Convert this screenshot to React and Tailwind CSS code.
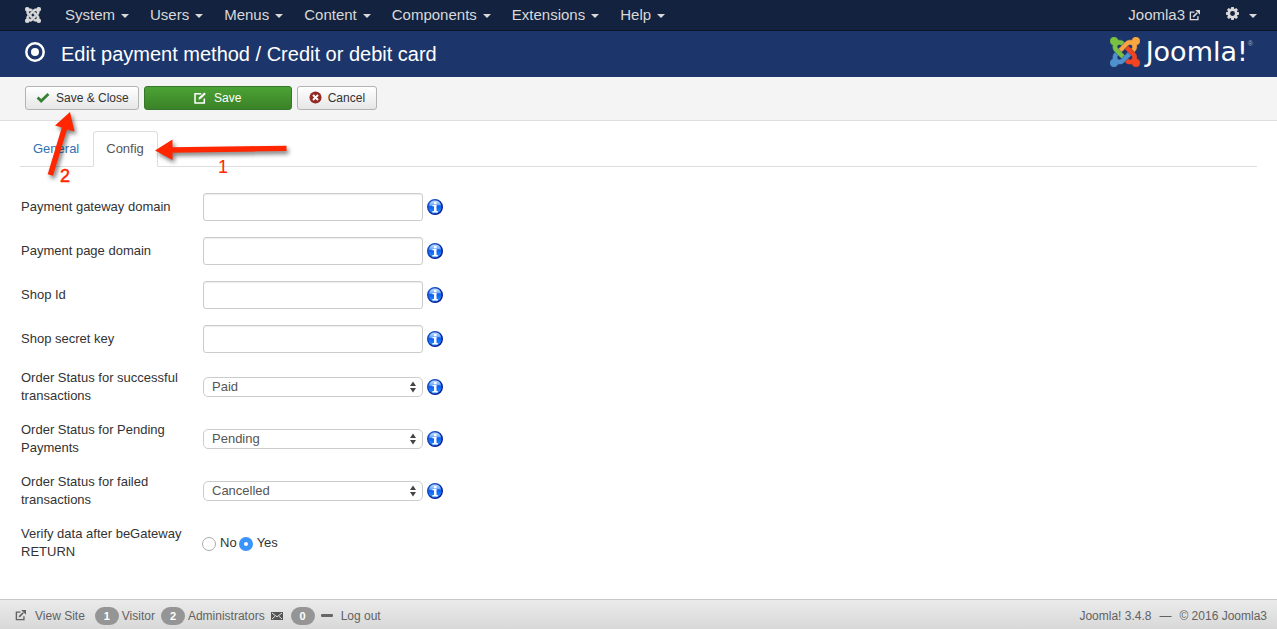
import { useState } from "react";

const JOOMLA_PIECES = [
  {
    color: "#7ac143",
    d: "M.6 92.1C.6 58.8 27.4 32 60.4 32c30 0 54.5 21.9 59.2 50.2 32.6-7.6 67.1.6 96.5 30l-44.3 44.3c-20.5-20.5-42.6-16.3-55.4-3.5-14.3 14.3-14.3 37.9 0 52.2l99.5 99.5-44 44.3c-87.7-87.2-49.7-49.7-99.8-99.7-26.8-26.5-35-64.8-24.8-98.9C20.4 144.6.6 120.7.6 92.1z",
  },
  {
    color: "#f9a541",
    d: "M130.1 208.5l44.3 44.3c10-10 89.7-89.7 99.7-99.8 14.3-14.3 37.6-14.3 51.9 0 12.8 12.8 17 35-3.5 55.4l44 44.3c31.2-31.2 38.5-67.6 28.9-101.2 29.2-4.1 51.9-29.2 51.9-59.5 0-33.2-26.8-60.1-59.8-60.1-30.3 0-55.4 22.5-59.5 51.6-33.8-9.9-71.7-1.5-98.3 25.1-18.3 19.1-71.1 71.5-99.6 99.9z",
  },
  {
    color: "#f44321",
    d: "M396.4 360.7c8.2-32.7-.9-68.5-26.3-93.9-11.8-12.2 5 4.7-99.5-99.7l-44.3 44.3 99.7 99.7c14.3 14.3 14.3 37.6 0 51.9-12.8 12.8-35 17-55.4-3.5l-44 44.3c27.6 30.2 68 38.8 102.7 28 5.5 27.4 29.7 48.1 58.9 48.1 33 0 59.8-26.8 59.8-60.1 0-30.2-22.5-55-51.6-59.1z",
  },
  {
    color: "#5091cd",
    d: "M312.1 307.6l-44-44.3c-87 86.4-50.4 50.4-99.7 99.8-14.3 14.3-37.6 14.3-51.9 0-13.1-13.4-16.9-35.3 3.2-55.4l-44-44.3c-30.2 30.2-38 65.2-29.5 98.3-26.7 6-46.2 29.9-46.2 58.2C0 453.2 26.8 480 59.8 480c28.6 0 52.5-19.8 58.6-46.7 32.7 8.2 68.5-.6 94.2-26 32.1-32 12.2-12.4 99.5-99.7z",
  },
];

function JoomlaMark({ className, mono }) {
  return (
    <svg viewBox="0 32 448 448" className={className} aria-hidden="true">
      {JOOMLA_PIECES.map((p) => (
        <path
          key={p.color}
          d={p.d}
          fill={mono ? "currentColor" : p.color}
          stroke={mono ? "currentColor" : p.color}
          strokeWidth={mono ? 14 : 8}
        />
      ))}
    </svg>
  );
}

function Caret() {
  return (
    <svg viewBox="0 0 8 4" className="mt-0.5 h-1 w-2" aria-hidden="true">
      <path d="M0 0h8L4 4z" fill="currentColor" />
    </svg>
  );
}

function ExternalIcon({ className }) {
  return (
    <svg viewBox="0 0 16 16" className={className} fill="none" stroke="currentColor" strokeWidth="2" aria-hidden="true">
      <path d="M8 3H2v11h11V9" />
      <path d="M6 10l6-6" strokeWidth="2.4" />
      <path d="M9 0h7v7z" fill="currentColor" stroke="none" />
    </svg>
  );
}

function GearIcon() {
  const teeth = [0, 45, 90, 135, 180, 225, 270, 315];
  return (
    <svg viewBox="0 0 16 16" className="mb-1 size-[13px]" aria-hidden="true">
      <circle cx="8" cy="8" r="4.6" fill="none" stroke="currentColor" strokeWidth="3.2" />
      {teeth.map((a) => (
        <path key={a} d="M6.5 0h3l.7 3.2H5.8z" fill="currentColor" transform={`rotate(${a} 8 8)`} />
      ))}
    </svg>
  );
}

function InfoIcon() {
  return (
    <svg viewBox="0 0 16 16" className="size-4 shrink-0" role="img" aria-label="Info">
      <defs>
        <linearGradient id="info-fill" x1="0" y1="0" x2="0" y2="1">
          <stop offset="0" stopColor="#1b63dd" />
          <stop offset=".5" stopColor="#0d62f2" />
          <stop offset="1" stopColor="#2f9bff" />
        </linearGradient>
        <linearGradient id="info-shine" x1="0" y1="0" x2="0" y2="1">
          <stop offset="0" stopColor="#c4dcff" />
          <stop offset="1" stopColor="#5b9df8" />
        </linearGradient>
        <linearGradient id="info-rim" x1="0" y1="0" x2="1" y2="1">
          <stop offset="0" stopColor="#1f5fd2" />
          <stop offset="1" stopColor="#00067c" />
        </linearGradient>
      </defs>
      <circle cx="8" cy="8" r="7.3" fill="url(#info-fill)" stroke="url(#info-rim)" strokeWidth="1.4" />
      <path d="M2 6.6a6.1 6.1 0 0 1 12 0C11 5.6 7 8.2 2 6.6z" fill="url(#info-shine)" />
      <path d="M7 3h2.5v2.2H7zM5.5 6h4v6h1.3v1.4H5.4V12H7V7.3H5.5z" fill="#fff" />
    </svg>
  );
}

const MENUS = ["System", "Users", "Menus", "Content", "Components", "Extensions", "Help"];

function NavBar() {
  return (
    <nav className="flex h-[31px] items-center border-b border-[#0d1526] bg-[#13223f] pr-5 pl-[25px] text-[15px] leading-5 text-[#d9d9d9]">
      <a href="#home" aria-label="Joomla" className="mr-6">
        <JoomlaMark mono className="size-4" />
      </a>
      <ul className="flex gap-[21px]">
        {MENUS.map((m) => (
          <li key={m}>
            <a href="#menu" className="flex items-center gap-1.5">
              {m}
              <Caret />
            </a>
          </li>
        ))}
      </ul>
      <a href="#site" className="ml-auto flex items-center gap-1">
        Joomla3
        <ExternalIcon className="size-[11px]" />
      </a>
      <button type="button" aria-label="Settings" className="ml-[26px] flex items-center gap-2.5">
        <GearIcon />
        <Caret />
      </button>
    </nav>
  );
}

function Header() {
  return (
    <header className="flex h-[46px] items-center bg-[#1c366b] pr-6 pl-[25px] text-white">
      <svg viewBox="0 0 20 20" className="mb-1 size-5" aria-hidden="true">
        <circle cx="10" cy="10" r="8.7" fill="none" stroke="currentColor" strokeWidth="2.5" />
        <circle cx="10" cy="10" r="4" fill="currentColor" />
      </svg>
      <h1 className="ml-4 text-[20px] leading-9">Edit payment method / Credit or debit card</h1>
      <div className="mb-1 ml-auto flex items-center">
        <JoomlaMark className="size-[30px]" />
        <span className="ml-1.5 font-['DejaVu_Sans',sans-serif] text-[27px] leading-7">Joomla!</span>
        <sup className="-top-2 text-[7px] leading-3 text-[#a4afc4]">®</sup>
      </div>
    </header>
  );
}

const BUTTON = "flex h-6 items-center rounded-[3px] border text-[12px] leading-4";
const PLAIN = "border-[#b3b3b3] bg-linear-to-b from-white to-[#e6e6e6] text-[#333]";

function Toolbar() {
  return (
    <div className="flex h-11 items-center gap-[5px] border-b border-[#dedede] bg-[#f4f4f4] px-[25px] pb-0.5">
      <button type="button" className={`${BUTTON} ${PLAIN} gap-1.5 pr-[9px] pl-2.5`}>
        <svg viewBox="0 0 14 12" className="h-3 w-3.5" fill="none" stroke="#378137" strokeWidth="2.8" aria-hidden="true">
          <path d="M1.6 5.4l3.6 3.7L12.4 2" />
        </svg>
        Save &amp; Close
      </button>
      <button
        type="button"
        className={`${BUTTON} w-[148px] justify-center gap-2 border-[#35782a] bg-linear-to-b from-[#4ba334] to-[#3b8228] text-white`}
      >
        <svg viewBox="0 0 14 14" className="size-3" fill="none" stroke="currentColor" strokeWidth="1.8" aria-hidden="true">
          <path d="M8.5 2H1.2v10.8H12V7.5" />
          <path d="M5 9l1-3 6-5.5 1.8 1.7L8 8z" fill="currentColor" stroke="none" />
        </svg>
        Save
      </button>
      <button type="button" className={`${BUTTON} ${PLAIN} gap-1.5 px-[11px]`}>
        <svg viewBox="0 0 14 14" className="size-[13px]" aria-hidden="true">
          <circle cx="7" cy="7" r="6.5" fill="#942a25" />
          <path d="M4.3 4.3l5.4 5.4M9.7 4.3L4.3 9.7" stroke="#fff" strokeWidth="2" />
        </svg>
        Cancel
      </button>
    </div>
  );
}

function Tabs() {
  return (
    <ul className="mt-2.5 flex border-b border-[#ddd] text-[13px] leading-[18px]">
      <li className="-mb-px">
        <a href="#general" className="block border border-transparent py-2 pr-[13px] pl-3 text-[#3071b5]">
          General
        </a>
      </li>
      <li className="-mb-px">
        <a
          href="#config"
          aria-current="page"
          className="block rounded-t-[4px] border border-[#ddd] border-b-white bg-white py-2 pr-[13px] pl-3 text-[#555]"
        >
          Config
        </a>
      </li>
    </ul>
  );
}

const FIELDS = [
  { id: "gateway", label: "Payment gateway domain" },
  { id: "page", label: "Payment page domain" },
  { id: "shop", label: "Shop Id" },
  { id: "secret", label: "Shop secret key" },
  { id: "success", label: "Order Status for successful transactions", value: "Paid" },
  { id: "pending", label: "Order Status for Pending Payments", value: "Pending" },
  { id: "failed", label: "Order Status for failed transactions", value: "Cancelled" },
];

const STATUSES = ["Paid", "Pending", "Cancelled"];

function SelectBox({ id, value }) {
  return (
    <div className="grid w-[220px] items-center">
      <select
        id={id}
        defaultValue={value}
        className="col-start-1 row-start-1 h-5 w-full appearance-none rounded-[5px] border border-[#ccc] bg-white px-2 text-[13px] leading-[18px] text-[#555]"
      >
        {STATUSES.map((s) => (
          <option key={s}>{s}</option>
        ))}
      </select>
      <svg viewBox="0 0 6 12" className="pointer-events-none col-start-1 row-start-1 mr-[7px] h-3 w-1.5 justify-self-end" aria-hidden="true">
        <path d="M0 5h6L3 .5zM0 7h6l-3 4.5z" fill="#444" />
      </svg>
    </div>
  );
}

function Radio({ label, checked, onChange }) {
  return (
    <label className="flex items-center gap-1">
      <input
        type="radio"
        name="verify"
        checked={checked}
        onChange={onChange}
        className="mt-0.5 size-3.5 appearance-none rounded-full border border-[#aaa] bg-white checked:border-[5px] checked:border-[#3b94fb]"
      />
      {label}
    </label>
  );
}

function ConfigForm() {
  const [verify, setVerify] = useState("Yes");
  return (
    <form className="mt-[26px] flex flex-col gap-4 pl-px text-[13px] leading-[18px] text-[#333]">
      {FIELDS.map((f) => (
        <div key={f.id} className="flex items-center">
          <label htmlFor={f.id} className="w-[182px] shrink-0 pr-4">
            {f.label}
          </label>
          {f.value ? (
            <SelectBox id={f.id} value={f.value} />
          ) : (
            <input
              id={f.id}
              type="text"
              className="h-7 w-[220px] rounded-[3px] border border-[#ccc] px-1.5 shadow-[inset_0_1px_1px_rgba(0,0,0,0.075)]"
            />
          )}
          <span className="ml-1">
            <InfoIcon />
          </span>
        </div>
      ))}
      <fieldset className="flex items-center">
        <legend className="float-left w-[181px] shrink-0 pr-4">Verify data after beGateway RETURN</legend>
        <div className="flex gap-0.5">
          <Radio label="No" checked={verify === "No"} onChange={() => setVerify("No")} />
          <Radio label="Yes" checked={verify === "Yes"} onChange={() => setVerify("Yes")} />
        </div>
      </fieldset>
    </form>
  );
}

function Badge({ children }) {
  return (
    <span className="flex h-[18px] w-6 items-center justify-center rounded-full bg-[#959595] text-[11px] leading-4 font-bold text-white">
      {children}
    </span>
  );
}

function StatusBar() {
  return (
    <footer className="sticky bottom-0 flex h-[30px] items-center border-t border-[#c9c9c9] bg-linear-to-b from-[#ebebeb] to-[#d8d8d8] pt-0.5 pr-2.5 pl-[15px] text-[12px] leading-4 text-[#626262]">
      <a href="#view" className="flex items-center gap-[9px]">
        <ExternalIcon className="size-[11px]" />
        View Site
      </a>
      <span className="ml-2.5 flex items-center gap-[3px]">
        <Badge>1</Badge>Visitor
      </span>
      <span className="ml-1.5 flex items-center gap-[3px]">
        <Badge>2</Badge>Administrators
      </span>
      <a href="#messages" aria-label="Messages" className="ml-1.5 flex items-center gap-2">
        <svg viewBox="0 0 12 8" className="h-2 w-3" aria-hidden="true">
          <path d="M0 0h12v8H0z" fill="#555" />
          <path d="M1 1l5 3.8L11 1M1 7l3-2.6M11 7L8 4.4" fill="none" stroke="#e2e2e2" />
        </svg>
        <Badge>0</Badge>
      </a>
      <a href="#logout" className="ml-1.5 flex items-center gap-2">
        <span className="h-[3px] w-3 rounded-[1px] bg-[#666]" />
        Log out
      </a>
      <p className="ml-auto flex gap-2">
        <span>Joomla! 3.4.8</span>
        <span>—</span>
        <span>© 2016 Joomla3</span>
      </p>
    </footer>
  );
}

function Annotations() {
  return (
    <svg
      viewBox="0 0 300 190"
      className="pointer-events-none absolute top-0 left-0 h-[190px] w-[300px] font-['Liberation_Sans',Arial,sans-serif] text-[18px]"
      fill="#ff2600"
    >
      <g className="drop-shadow-[2px_3px_2px_rgba(0,0,0,0.5)]">
        <path d="M155 150.500L172.500 139.500V147.300L286.500 145.700V151L172.500 152.700V160z" />
        <path d="M70 112L74.500 131.500L67 129.500L53 175.800L47.700 174.200L61.800 127.500L55 125.500z" />
      </g>
      <text x="218" y="173">1</text>
      <text x="60" y="182" stroke="#ff2600" strokeWidth="0.5">2</text>
    </svg>
  );
}

export default function App() {
  return (
    <div className="relative flex min-h-screen flex-col bg-white font-['Liberation_Sans',Arial,sans-serif]">
      <NavBar />
      <Header />
      <Toolbar />
      <main className="flex-1 px-5 pb-5">
        <Tabs />
        <ConfigForm />
      </main>
      <StatusBar />
      <Annotations />
    </div>
  );
}
